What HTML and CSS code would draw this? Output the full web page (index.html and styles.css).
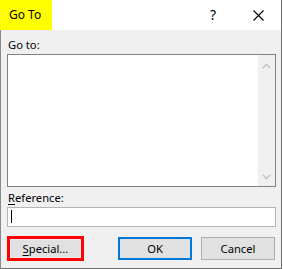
FILE: index.html
```html
<!DOCTYPE html>
<html>
<head>
<meta charset="utf-8">
<link rel="stylesheet" href="styles.css">
</head>
<body>
<div class="window">
  <div class="titlebar">
    <div class="title">Go To</div>
    <div class="spacer"></div>
    <div class="help">?</div>
    <div class="close">
      <svg width="11" height="11" viewBox="0 0 11 11"><path d="M0.5 0.5 L10.5 10.5 M10.5 0.5 L0.5 10.5" stroke="#000" stroke-width="1.1" fill="none"/></svg>
    </div>
  </div>
  <div class="content">
    <div class="label">Go to:</div>
    <div class="listbox">
      <div class="listarea"></div>
      <div class="scrollbar">
        <svg class="arrow" width="9" height="6" viewBox="0 0 9 6"><path d="M0.8 5.2 L4.5 1.3 L8.2 5.2" stroke="#c2c2c2" stroke-width="1.6" fill="none"/></svg>
        <svg class="arrow" width="9" height="6" viewBox="0 0 9 6"><path d="M0.8 0.8 L4.5 4.7 L8.2 0.8" stroke="#c2c2c2" stroke-width="1.6" fill="none"/></svg>
      </div>
    </div>
    <div class="label label-ref"><u>R</u>eference:</div>
    <div class="input"><span class="caret"></span></div>
    <div class="buttons">
      <div class="highlight"><div class="btn btn-special"><u>S</u>pecial...</div></div>
      <div class="btn btn-ok">OK</div>
      <div class="btn btn-cancel">Cancel</div>
    </div>
  </div>
</div>
</body>
</html>
```

FILE: styles.css
```css
* { box-sizing: border-box; }
html, body { margin: 0; padding: 0; background: #ffffff; }
body {
  width: 283px;
  height: 269px;
  font-family: "Noto Sans", "Open Sans", "Liberation Sans", sans-serif;
  font-size: 11.2px;
  color: #000;
}
.window {
  width: 282px;
  height: 269px;
  border-left: 1px solid #8a8a8a;
  border-right: 1px solid #6e6e6e;
  border-bottom: 1px solid #6e6e6e;
  background: #f0f0f0;
  display: flex;
  flex-direction: column;
}
.titlebar {
  height: 30px;
  background: #ffffff;
  display: flex;
  align-items: center;
  margin-left: -1px;
}
.title {
  background: #ffff00;
  width: 52px;
  height: 30px;
  line-height: 29px;
  padding-left: 9px;
  font-size: 12px;
}
.spacer { flex: 1; }
.help {
  width: 14px;
  text-align: center;
  font-size: 14px;
  margin-right: 33px;
  line-height: 30px;
}
.close {
  width: 11px;
  height: 11px;
  margin-right: 17px;
  display: flex;
}
.content {
  padding: 7px 6px 0 6px;
  display: flex;
  flex-direction: column;
}
.label {
  height: 16px;
  line-height: 16px;
  padding-left: 1px;
}
.label u { text-decoration-thickness: 1px; text-underline-offset: 2px; }
.listbox {
  margin-top: 1px;
  height: 133px;
  width: 269px;
  border: 1px solid #828282;
  background: #ffffff;
  display: flex;
}
.listarea { flex: 1; }
.scrollbar {
  width: 17px;
  background: #f0f0f0;
  display: flex;
  flex-direction: column;
  justify-content: space-between;
  align-items: center;
  padding: 8px 0 6px 0;
}
.arrow { display: block; }
.label-ref { margin-top: 3px; }
.input {
  margin-top: 1px;
  height: 20px;
  width: 269px;
  border: 1px solid #b4b4b4;
  background: #ffffff;
  padding: 2px 0 0 3px;
}
.caret {
  display: block;
  width: 1px;
  height: 13px;
  background: #000;
}
.buttons {
  margin-top: 9px;
  display: flex;
  align-items: flex-start;
}
.highlight {
  border: 3px solid #ff0000;
  width: 77px;
  height: 25px;
}
.btn {
  background: #e1e1e1;
  border: 1px solid #adadad;
  display: flex;
  align-items: center;
  justify-content: center;
  height: 23px;
  width: 75px;
}
.btn u { text-decoration-thickness: 1px; text-underline-offset: 2px; }
.btn-special {
  width: 71px;
  height: 19px;
  border-color: #ececec;
}
.btn-ok {
  margin-left: 34px;
  margin-top: 1px;
  border: 2px solid #0078d7;
}
.btn-cancel {
  margin-left: 9px;
  margin-top: 1px;
}
```
